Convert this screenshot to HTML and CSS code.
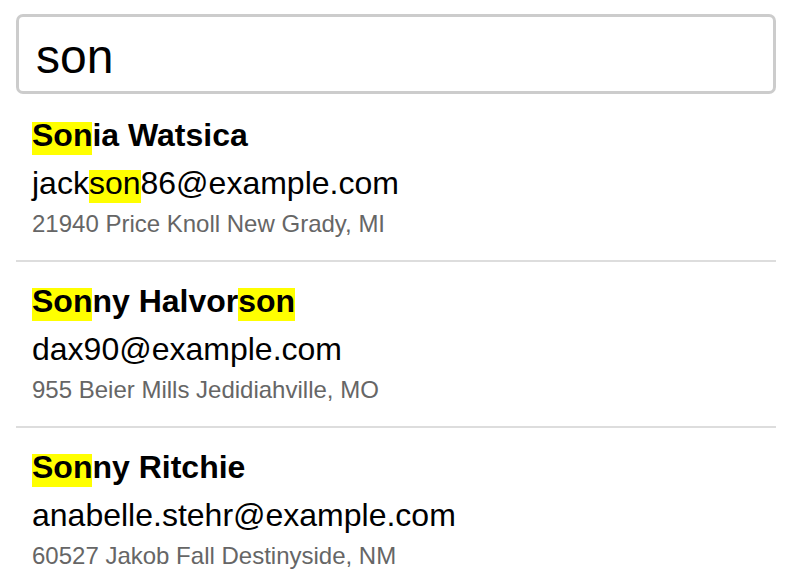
FILE: index.html
```html
<!DOCTYPE html>
<html lang="en">
<head>
<meta charset="utf-8">
<title>Search</title>
<link rel="stylesheet" href="styles.css">
</head>
<body>
<div class="page">
  <input class="search" type="text" value="son">
  <ul class="results">
    <li class="result">
      <div class="name"><mark class="hl">Son</mark>ia Watsica</div>
      <div class="email">jack<mark class="hl">son</mark>86@example.com</div>
      <div class="address">21940 Price Knoll New Grady, MI</div>
    </li>
    <li class="result">
      <div class="name"><mark class="hl">Son</mark>ny Halvor<mark class="hl">son</mark></div>
      <div class="email">dax90@example.com</div>
      <div class="address">955 Beier Mills Jedidiahville, MO</div>
    </li>
    <li class="result">
      <div class="name"><mark class="hl">Son</mark>ny Ritchie</div>
      <div class="email">anabelle.stehr@example.com</div>
      <div class="address">60527 Jakob Fall Destinyside, NM</div>
    </li>
  </ul>
</div>
</body>
</html>
```

FILE: styles.css
```css
html, body {
  margin: 0;
  padding: 0;
  background: #ffffff;
}

body {
  font-family: "Liberation Sans", Arial, Helvetica, sans-serif;
  color: #000000;
}

.page {
  padding: 14px 24px 0 16px;
}

.search {
  display: block;
  box-sizing: border-box;
  width: 100%;
  height: 80px;
  margin: 0 0 2px 0;
  padding: 5px 17px 0 17px;
  border: 3px solid #cccccc;
  border-radius: 7px;
  font-family: "Liberation Sans", Arial, Helvetica, sans-serif;
  font-size: 48px;
  color: #000000;
  background: #ffffff;
  outline: none;
}

.results {
  list-style: none;
  margin: 0;
  padding: 0;
}

.result {
  padding: 15px 16px 19px 16px;
  border-bottom: 2px solid #dddddd;
}

.name {
  font-size: 32px;
  font-weight: bold;
  line-height: 48px;
}

.email {
  font-size: 32px;
  line-height: 48px;
}

.address {
  font-size: 24px;
  line-height: 34px;
  color: #666666;
}

.hl {
  display: inline-block;
  height: 33px;
  line-height: 27.8px;
  vertical-align: baseline;
  background: #ffff00;
  color: inherit;
}
```
